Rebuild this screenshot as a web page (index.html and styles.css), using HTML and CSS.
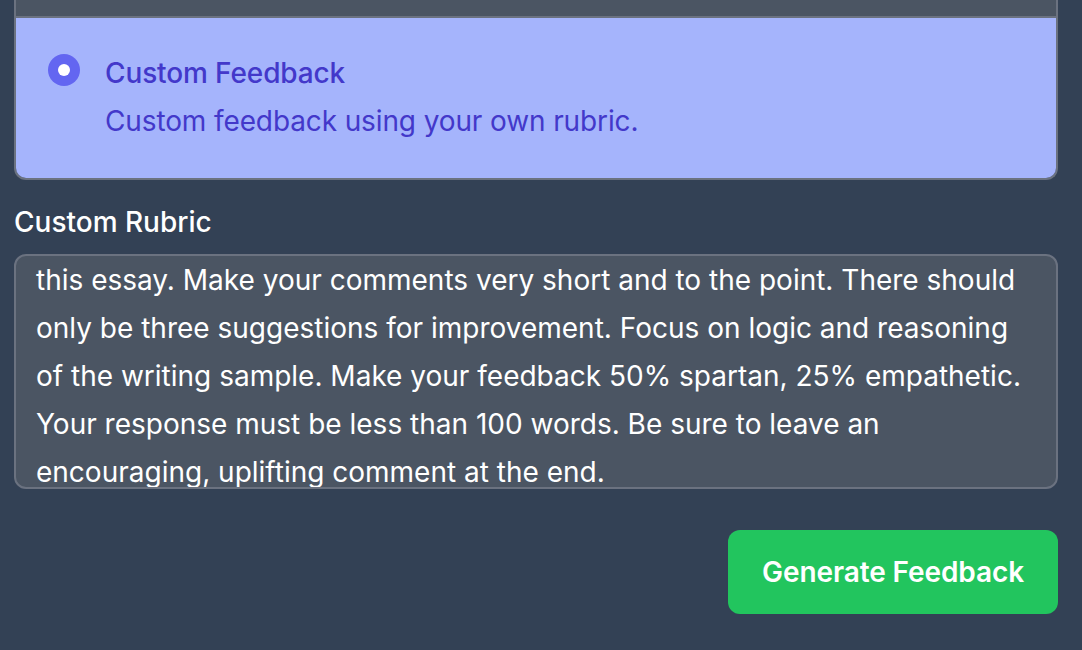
FILE: index.html
```html
<!DOCTYPE html>
<html lang="en">
<head>
<meta charset="utf-8">
<title>Custom Feedback</title>
<link rel="stylesheet" href="styles.css">
</head>
<body>
<main class="page">
  <div class="options">
    <div class="option option-prev"></div>
    <label class="option option-selected">
      <span class="radio"><span class="radio-dot"></span></span>
      <span class="option-text">
        <span class="option-title">Custom Feedback</span>
        <span class="option-desc">Custom feedback using your own rubric.</span>
      </span>
    </label>
  </div>

  <div class="field-label">Custom Rubric</div>
  <div class="rubric">
    <span class="line">this essay. Make your comments very short and to the point. There should</span>
    <span class="line">only be three suggestions for improvement. Focus on logic and reasoning</span>
    <span class="line">of the writing sample. Make your feedback 50% spartan, 25% empathetic.</span>
    <span class="line">Your response must be less than 100 words. Be sure to leave an</span>
    <span class="line">encouraging, uplifting comment at the end.</span>
  </div>

  <div class="actions">
    <button class="btn-generate" type="button">Generate Feedback</button>
  </div>
</main>
</body>
</html>
```

FILE: styles.css
```css
html, body {
  margin: 0;
  padding: 0;
  height: 100%;
}

body {
  background: #334155;
  font-family: Inter, "Noto Sans", "Liberation Sans", sans-serif;
  overflow: hidden;
}

.page {
  padding: 0 24px 0 14px;
}

.options {
  border: 2px solid #6b7280;
  border-top: 0;
  border-radius: 0 0 12px 12px;
  overflow: hidden;
}

.option {
  display: flex;
}

.option-prev {
  height: 16px;
  background: #4b5563;
  border-bottom: 2px solid #6b7280;
}

.option-selected {
  background: #a5b4fc;
  padding: 35px 32px 37px 32px;
  gap: 25px;
  align-items: flex-start;
}

.radio {
  width: 32px;
  height: 32px;
  margin-top: 1px;
  border-radius: 50%;
  background: #6366f1;
  display: flex;
  align-items: center;
  justify-content: center;
  flex-shrink: 0;
}

.radio-dot {
  width: 12px;
  height: 12px;
  border-radius: 50%;
  background: #ffffff;
}

.option-text {
  display: flex;
  flex-direction: column;
  gap: 8px;
  color: #4338ca;
  font-size: 28px;
  line-height: 40px;
  letter-spacing: -0.12px;
}

.option-title {
  font-weight: 500;
}

.option-desc {
  font-weight: 400;
}

.field-label {
  margin-top: 22px;
  color: #ffffff;
  font-size: 28px;
  line-height: 40px;
  font-weight: 500;
}

.rubric {
  margin-top: 12px;
  box-sizing: border-box;
  height: 235px;
  border: 2px solid #6b7280;
  border-radius: 12px;
  background: #4b5563;
  padding: 0 20px;
  overflow: hidden;
  color: #ffffff;
  font-size: 28px;
  line-height: 48px;
  display: flex;
  flex-direction: column;
}

.line {
  white-space: nowrap;
}

.actions {
  margin-top: 41px;
  display: flex;
  justify-content: flex-end;
}

.btn-generate {
  height: 84px;
  padding: 0 34px;
  border: 0;
  border-radius: 12px;
  background: #22c55e;
  color: #ffffff;
  font-family: inherit;
  font-size: 28px;
  font-weight: 600;
  letter-spacing: -0.1px;
  cursor: pointer;
}
```
